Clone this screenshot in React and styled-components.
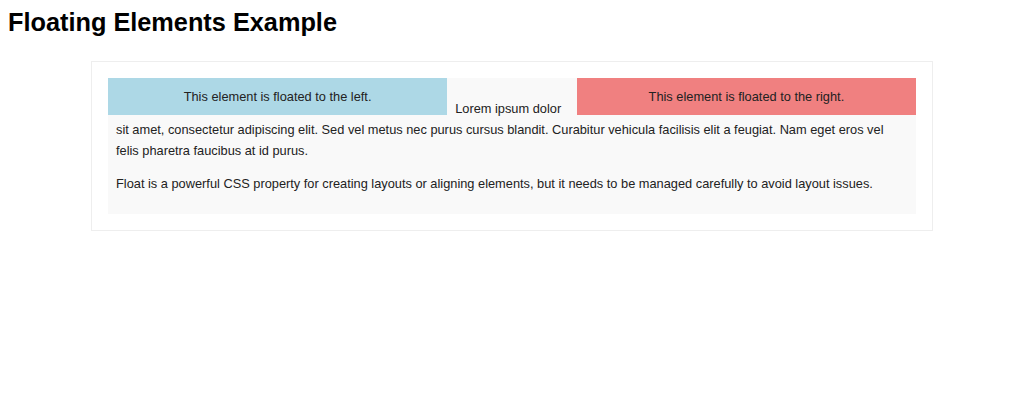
import React from "react";
import styled, { createGlobalStyle } from "styled-components";

const Global = createGlobalStyle`
  body {
    margin: 8px;
    font-family: "Liberation Sans", Arial, sans-serif;
    background: #ffffff;
    color: #333;
  }
`;

const Title = styled.h1`
  margin: 0 0 24px;
  font-size: 25.3px;
  font-weight: bold;
  color: #000;
  line-height: normal;
`;

const Card = styled.div`
  width: 808px;
  margin: 0 auto;
  padding: 16px;
  border: 1px solid #eee;
  background: #fff;
`;

const Container = styled.div`
  display: flow-root;
  background: #f9f9f9;
  font-size: 12.8px;
  line-height: 21px;
  color: #222;
`;

const FloatBox = styled.div`
  float: ${(p) => p.$side};
  width: 40%;
  padding: 8px;
  text-align: center;
  background: ${(p) => (p.$side === "left" ? "#add8e6" : "#f08080")};
  margin-${(p) => (p.$side === "left" ? "right" : "left")}: 8px;
`;

const Para = styled.p`
  margin: 12px 0 0;
  padding: 0 8px;
  &:first-of-type {
    margin-top: 20px;
  }
  &:last-of-type {
    margin-bottom: 20px;
  }
`;

export default function App() {
  return (
    <>
      <Global />
      <Title>Floating Elements Example</Title>
      <Card>
        <Container>
          <FloatBox $side="left">This element is floated to the left.</FloatBox>
          <FloatBox $side="right">This element is floated to the right.</FloatBox>
          <Para>
            Lorem ipsum dolor sit amet, consectetur adipiscing elit. Sed vel metus nec purus cursus blandit. Curabitur vehicula facilisis elit a feugiat. Nam eget eros vel felis pharetra faucibus at id purus.
          </Para>
          <Para>
            Float is a powerful CSS property for creating layouts or aligning elements, but it needs to be managed carefully to avoid layout issues.
          </Para>
        </Container>
      </Card>
    </>
  );
}
